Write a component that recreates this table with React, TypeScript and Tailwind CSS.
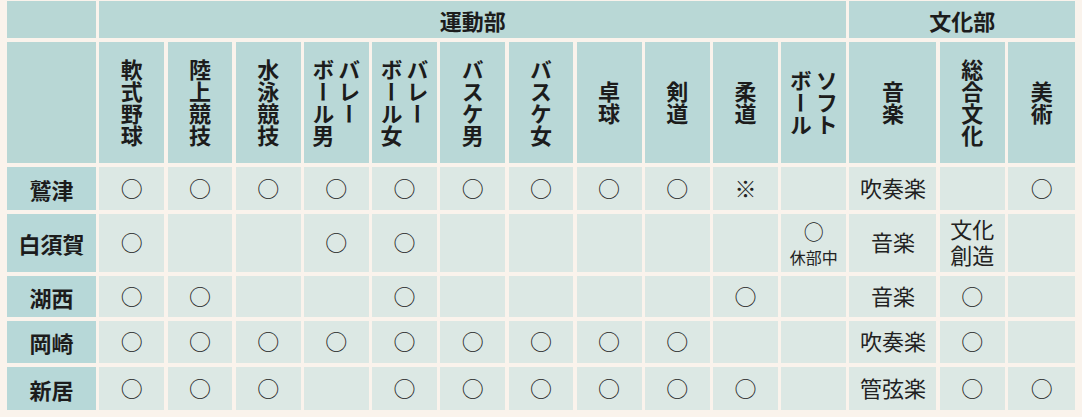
import React from "react";

const heads: string[][] = [
  ["軟式野球"],
  ["陸上競技"],
  ["水泳競技"],
  ["バレー", "ボール男"],
  ["バレー", "ボール女"],
  ["バスケ男"],
  ["バスケ女"],
  ["卓球"],
  ["剣道"],
  ["柔道"],
  ["ソフト", "ボール"],
  ["音楽"],
  ["総合文化"],
  ["美術"],
];

const O = "○";
const rows: { name: string; cells: string[] }[] = [
  { name: "鷲津", cells: [O, O, O, O, O, O, O, O, O, "※", "", "吹奏楽", "", O] },
  { name: "白須賀", cells: [O, "", "", O, O, "", "", "", "", "", "KYUBU", "音楽", "BUNKA", ""] },
  { name: "湖西", cells: [O, O, "", "", O, "", "", "", "", O, "", "音楽", O, ""] },
  { name: "岡崎", cells: [O, O, O, O, O, O, O, O, O, "", "", "吹奏楽", O, ""] },
  { name: "新居", cells: [O, O, O, "", O, O, O, O, O, O, "", "管弦楽", O, O] },
];

function Body({ v }: { v: string }) {
  if (v === "KYUBU") {
    return (
      <div className="flex flex-col items-center pt-[4px]">
        <span className="text-[20px] leading-[29px]">○</span>
        <span className="text-[16px] leading-[23px]">休部中</span>
      </div>
    );
  }
  if (v === "BUNKA") {
    return (
      <div className="whitespace-pre-line text-center text-[22px] leading-[26px]">
        {"文化\n創造"}
      </div>
    );
  }
  return <span className="text-[22px] leading-none">{v}</span>;
}

export default function App() {
  return (
    <div className="w-[1082px] h-[417px] bg-[#faf3ec] pl-[7px] pt-[1px] font-['Noto_Sans_CJK_JP','Noto_Sans',sans-serif] text-[#1c1c1c]">
      <div className="grid w-[1069px] grid-cols-[89px_repeat(11,64.8px)_87px_65px_67px] grid-rows-[37px_121px_43px_58px_41px_42px_43px] gap-x-[3.4px] gap-y-[4px]">
        <div className="bg-[#b8d7d5]" />
        <div className="col-span-11 flex items-center justify-center bg-[#b9d8d6] text-[22px] font-bold leading-none">
          運動部
        </div>
        <div className="col-span-3 flex items-center justify-center bg-[#b9d8d7] text-[22px] font-bold leading-none">
          文化部
        </div>

        <div className="bg-[#b8d7d5]" />
        {heads.map((h, i) => (
          <div key={i} className="flex items-center justify-center bg-[#b9d8d7]">
            <span className="[writing-mode:vertical-rl] text-[22px] font-bold leading-[26px]">
              {h.map((line, j) => (
                <React.Fragment key={j}>
                  {j > 0 && <br />}
                  {line}
                </React.Fragment>
              ))}
            </span>
          </div>
        ))}

        {rows.map((r) => (
          <React.Fragment key={r.name}>
            <div className="flex items-center justify-center bg-[#b7d8d8] text-[22px] font-bold leading-none">
              {r.name}
            </div>
            {r.cells.map((c, i) => (
              <div key={i} className="flex items-center justify-center bg-[#dce8e4] pb-[4px] text-[#222]">
                {c && <Body v={c} />}
              </div>
            ))}
          </React.Fragment>
        ))}
      </div>
    </div>
  );
}
